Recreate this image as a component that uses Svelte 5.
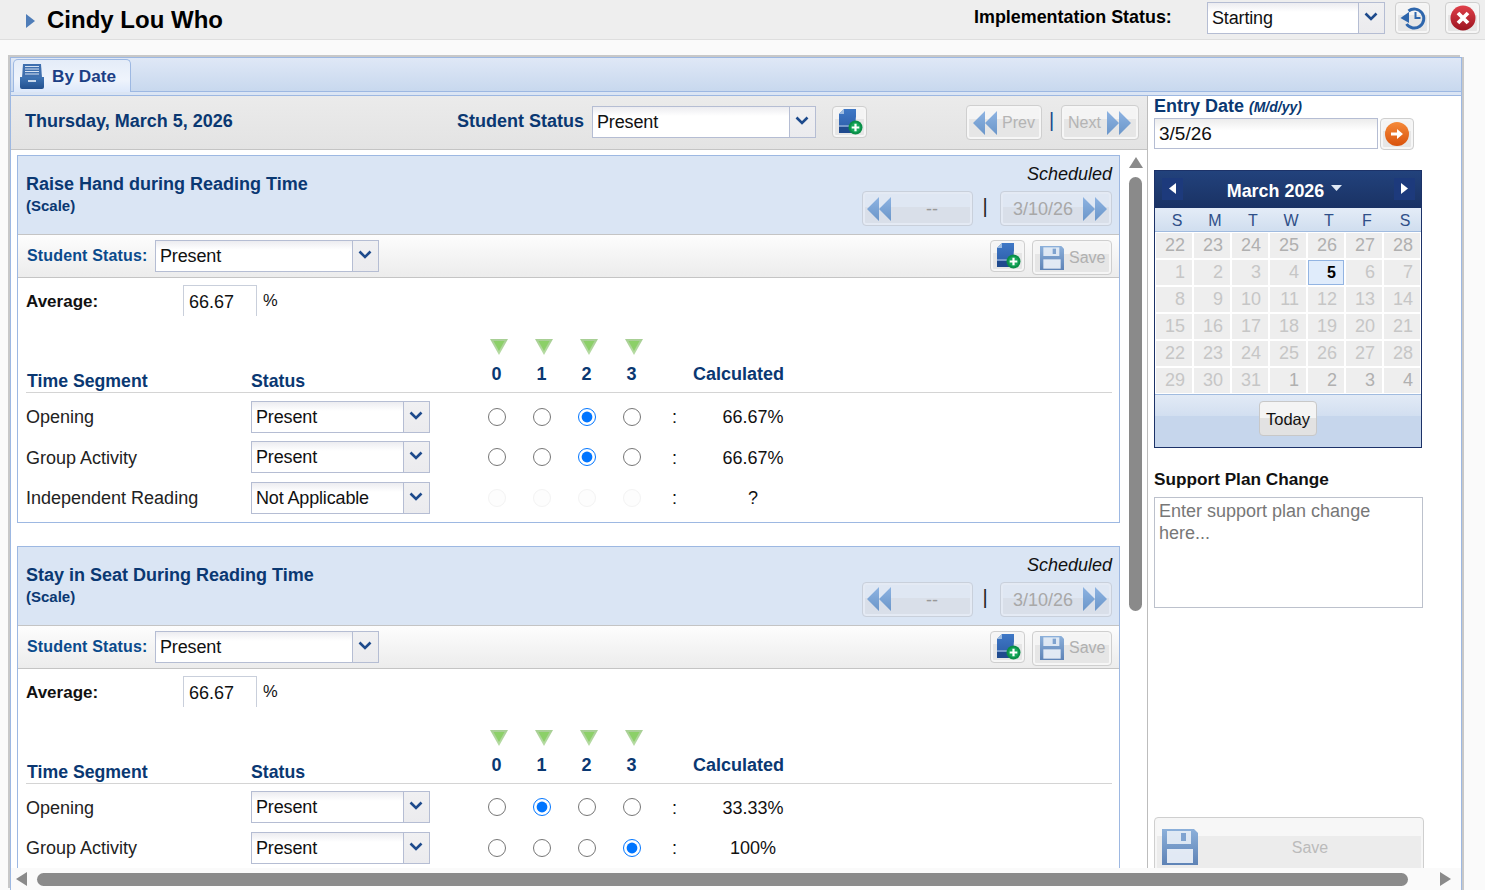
<script>
  const scale = [0, 1, 2, 3];
  const cards = [
    { title: 'Raise Hand during Reading Time', rows: [
      { name: 'Opening', status: 'Present', val: 2, calc: '66.67%' },
      { name: 'Group Activity', status: 'Present', val: 2, calc: '66.67%' },
      { name: 'Independent Reading', status: 'Not Applicable', val: -1, calc: '?', off: true }
    ]},
    { title: 'Stay in Seat During Reading Time', rows: [
      { name: 'Opening', status: 'Present', val: 1, calc: '33.33%' },
      { name: 'Group Activity', status: 'Present', val: 3, calc: '100%' }
    ]}
  ];
  const dows = ['S', 'M', 'T', 'W', 'T', 'F', 'S'];
  const d = (n, dark) => ({ n, dark });
  const days = [
    ...[22,23,24,25,26,27,28].map(n => d(n, true)),
    ...[1,2,3,4,5,6,7].map(n => d(n)),
    ...[8,9,10,11,12,13,14].map(n => d(n)),
    ...[15,16,17,18,19,20,21].map(n => d(n)),
    ...[22,23,24,25,26,27,28].map(n => d(n)),
    ...[29,30,31].map(n => d(n)),
    ...[1,2,3,4].map(n => d(n, true))
  ];
</script>

{#snippet select(text, cls)}
  <div class="select {cls}">
    <div class="sel-text">{text}</div>
    <div class="sel-btn">
      <svg width="14" height="9" viewBox="0 0 14 9"><path d="M1.5 1.5 7 7l5.500-5.500" fill="none" stroke="#1d4a8c" stroke-width="2.600"/></svg>
    </div>
  </div>
{/snippet}

{#snippet addIcon()}
  <svg width="26" height="28" viewBox="0 0 26 28">
    <path d="M7 1h12v7.500l-1 9.500-3 7H2V6z" fill="url(#docg)"/>
    <path d="M7 1v5H2z" fill="#9dbbe0"/>
    <path d="M2 18h12" stroke="#bcd0ea" stroke-width="1"/>
    <path d="M2 19h12v6H2z" fill="#1f4a8e"/>
    <circle cx="18.500" cy="19.500" r="7" fill="#0a8f48"/>
    <circle cx="18.500" cy="19.500" r="5" fill="#17a85b"/>
    <path d="M18.500 15.700v7.600M14.700 19.500h7.600" stroke="#fff" stroke-width="2.200"/>
  </svg>
{/snippet}

{#snippet disk(size)}
  <svg width={size} height={size} viewBox="0 0 36 36">
    <path d="M0 0h32l4 4v32H0z" fill="url(#diskg)"/>
    <path d="M5 2h24v13H5z" fill="#eef3f9" opacity=".85"/>
    <path d="M5 20h26v14H5z" fill="#eef3f9" opacity=".9"/>
    <rect x="19" y="4" width="5" height="8" fill="#7fa3d0"/>
  </svg>
{/snippet}

{#snippet dbl(dir)}
  <svg class={dir} width="26" height="26" viewBox="0 0 26 26">
    <path d="M13 1v24L1 13zM25 1v24L13 13z" fill="url(#arrg)"/>
  </svg>
{/snippet}

{#snippet tri()}
  <svg width="18" height="16" viewBox="0 0 18 16">
    <path d="M0 0h18l-9 16z" fill="url(#trig)"/>
    <path d="M3.500 2h11L9 12z" fill="#8cd068"/>
  </svg>
{/snippet}

<svg class="defs" width="0" height="0">
  <defs>
    <linearGradient id="docg" x1="0" y1="0" x2="0" y2="1"><stop offset="0" stop-color="#3f78c6"/><stop offset="1" stop-color="#2a5aa5"/></linearGradient>
    <linearGradient id="diskg" x1="0" y1="0" x2="0" y2="1"><stop offset="0" stop-color="#8cb0da"/><stop offset="1" stop-color="#5e83b6"/></linearGradient>
    <linearGradient id="arrg" x1="0" y1="0" x2="0" y2="1"><stop offset="0" stop-color="#8db3e2"/><stop offset="1" stop-color="#6b96c9"/></linearGradient>
    <linearGradient id="trig" x1="0" y1="0" x2="0" y2="1"><stop offset="0" stop-color="#a8cf95"/><stop offset="1" stop-color="#b7dca4"/></linearGradient>
    <linearGradient id="redg" x1="0" y1="0" x2="0" y2="1"><stop offset="0" stop-color="#e0404a"/><stop offset="1" stop-color="#9c1420"/></linearGradient>
    <linearGradient id="orag" x1="0" y1="0" x2="0" y2="1"><stop offset="0" stop-color="#f58a3a"/><stop offset="1" stop-color="#d9520c"/></linearGradient>
    <linearGradient id="trayg" x1="0" y1="0" x2="0" y2="1"><stop offset="0" stop-color="#3f74b4"/><stop offset="1" stop-color="#23508e"/></linearGradient>
  </defs>
</svg>

<div class="page">
  <header class="top">
    <svg class="caret" width="9" height="14" viewBox="0 0 9 14"><path d="M0 0l9 7-9 7z" fill="#4f7db8"/></svg>
    <h1>Cindy Lou Who</h1>
    <div class="impl">Implementation Status:</div>
    {@render select('Starting', 'sel-top')}
    <button class="btn icon restore" aria-label="History">
      <svg width="28" height="28" viewBox="0 0 28 28">
        <path d="M9.500 7a9.500 9.500 0 1 1-2 13" fill="none" stroke="#2f67ad" stroke-width="3"/>
        <path d="M1.500 14l8.500-6v11z" fill="#2f67ad"/>
        <path d="M16.500 8v6h5" fill="none" stroke="#2f67ad" stroke-width="2"/>
      </svg>
    </button>
    <button class="btn icon close" aria-label="Close">
      <svg width="26" height="26" viewBox="0 0 26 26">
        <circle cx="13" cy="13" r="12.500" fill="url(#redg)"/>
        <path d="M8 8l10 10M18 8L8 18" stroke="#fff" stroke-width="3.800"/>
      </svg>
    </button>
  </header>

  <main class="window">
    <div class="tabs">
      <div class="tab">
        <svg width="25" height="25" viewBox="0 0 25 25">
          <path d="M3 0h18l1 14H2z" fill="#3f6fae"/>
          <path d="M5 2.500h14M5 5h14M5 7.500h14M5 10h14" stroke="#d5e2f2" stroke-width="1.200"/>
          <path d="M0 13h24v10a2 2 0 0 1-2 2H2a2 2 0 0 1-2-2z" fill="url(#trayg)"/>
          <rect x="8" y="16" width="8" height="2" fill="#c8d8ec"/>
        </svg>
        <span>By Date</span>
      </div>
    </div>
    <div class="tabgap"></div>

    <div class="content">
      <section class="left">
        <div class="toolbar">
          <div class="date">Thursday, March 5, 2026</div>
          <div class="tb-status">Student Status</div>
          {@render select('Present', 'sel-main')}
          <button class="btn add main-add" aria-label="Add">{@render addIcon()}</button>
          <button class="btn nav prev" disabled>{@render dbl('')}<span>Prev</span></button>
          <span class="sep blue">|</span>
          <button class="btn nav next" disabled><span>Next</span>{@render dbl('flip')}</button>
        </div>

        <div class="scroller">
          <div class="cards">
            {#each cards as card}
              <article class="card">
                <div class="card-head">
                  <div class="titles">
                    <div class="title">{card.title}</div>
                    <div class="sub">(Scale)</div>
                  </div>
                  <div class="head-right">
                    <div class="sched">Scheduled</div>
                    <div class="head-nav">
                      <button class="btn nav wide" disabled>{@render dbl('')}<span class="mid">--</span></button>
                      <span class="sep dark">|</span>
                      <button class="btn nav date-nav" disabled><span class="mid">3/10/26</span>{@render dbl('flip')}</button>
                    </div>
                  </div>
                </div>
                <div class="card-bar">
                  <span class="lbl">Student Status:</span>
                  {@render select('Present', 'sel-card')}
                  <span class="fill"></span>
                  <button class="btn add" aria-label="Add">{@render addIcon()}</button>
                  <button class="btn save-sm" disabled>{@render disk(24)}<span>Save</span></button>
                </div>
                <div class="card-body">
                  <div class="avg">
                    <span class="avg-l">Average:</span>
                    <span class="avg-box">66.67</span>
                    <span class="pct">%</span>
                  </div>
                  <div class="grid">
                    <div class="hd hd-seg">Time Segment</div>
                    <div class="hd hd-seg hd-st">Status</div>
                    {#each scale as s}
                      <div class="hd hd-num"><span class="tri">{@render tri()}</span><span>{s}</span></div>
                    {/each}
                    <div class="hd"></div>
                    <div class="hd hd-calc">Calculated</div>
                    <div class="hd"></div>
                    {#each card.rows as r, ri}
                      <div class="cell name">{r.name}</div>
                      <div class="cell">{@render select(r.status, 'sel-row')}</div>
                      {#each scale as s}
                        <div class="cell radio" class:off={r.off}>
                          <input type="radio" name={card.title + ri} checked={r.val === s} disabled={r.off} aria-label={String(s)} />
                        </div>
                      {/each}
                      <div class="cell colon">:</div>
                      <div class="cell calc">{r.calc}</div>
                      <div class="cell"></div>
                    {/each}
                  </div>
                </div>
              </article>
            {/each}
          </div>
          <div class="vscroll">
            <svg width="14" height="11" viewBox="0 0 14 11"><path d="M7 0l7 11H0z" fill="#8a8a8a"/></svg>
            <div class="vthumb"></div>
          </div>
        </div>
      </section>

      <aside class="right">
        <div class="entry"><b>Entry Date</b> <i>(M/d/yy)</i></div>
        <div class="entry-row">
          <div class="entry-input">3/5/26</div>
          <button class="btn go" aria-label="Go">
            <svg width="24" height="24" viewBox="0 0 24 24">
              <circle cx="12" cy="12" r="12" fill="url(#orag)"/>
              <path d="M6 10.500h6V7l6 5-6 5v-3.500H6z" fill="#fff"/>
            </svg>
          </button>
        </div>

        <div class="cal">
          <div class="cal-head">
            <span class="cal-arrow"><svg width="7" height="11" viewBox="0 0 7 11"><path d="M7 0v11L0 5.500z" fill="#fff"/></svg></span>
            <span class="cal-title">March 2026 <svg width="11" height="6" viewBox="0 0 11 6"><path d="M0 0h11L5.500 6z" fill="#dfe8f4"/></svg></span>
            <span class="cal-arrow"><svg width="7" height="11" viewBox="0 0 7 11"><path d="M0 0v11l7-5.500z" fill="#fff"/></svg></span>
          </div>
          <div class="cal-dows">
            {#each dows as w}<span>{w}</span>{/each}
          </div>
          <div class="cal-days">
            {#each days as c, i}
              <span class="day" class:dark={c.dark} class:today={i === 11}>{c.n}</span>
            {/each}
          </div>
          <div class="cal-foot"><button class="today-btn">Today</button></div>
        </div>

        <div class="spc-l">Support Plan Change</div>
        <div class="spc">Enter support plan change here...</div>
        <div class="spacer"></div>
        <button class="btn save-lg" disabled>
          <span class="disk-wrap">{@render disk(36)}</span>
          <span>Save</span>
        </button>
      </aside>
    </div>

    <div class="hscroll">
      <svg width="11" height="14" viewBox="0 0 11 14"><path d="M11 0v14L0 7z" fill="#8a8a8a"/></svg>
      <div class="hthumb"></div>
      <svg width="11" height="14" viewBox="0 0 11 14"><path d="M0 0v14l11-7z" fill="#8a8a8a"/></svg>
    </div>
  </main>
</div>

<style>
  :global(body) { margin: 0; background: #fafafa; font-family: "Liberation Sans", Arial, sans-serif; }
  .defs { position: absolute; }
  .page { height: 890px; width: 1485px; overflow: hidden; background: #fafafa; color: #111; font-size: 18px; }
  button { font-family: inherit; padding: 0; }

  .top { height: 39px; border-bottom: 1px solid #dedede; background: #eee; display: flex; align-items: flex-start; padding-right: 5px; }
  .caret { margin: 14px 0 0 26px; }
  h1 { margin: 5px 0 0 12px; font-size: 24px; font-weight: bold; line-height: 30px; color: #000; }
  .impl { margin: 7px 0 0 auto; font-weight: bold; font-size: 17.900px; line-height: 20px; color: #000; width: 233px; white-space: nowrap; }

  .select { display: flex; box-sizing: border-box; height: 32px; border: 1px solid #b5bdd3; background: linear-gradient(#ececf0, #fff 30%); }
  .sel-text { flex: 1; padding-left: 4px; line-height: 30px; font-size: 18px; letter-spacing: -.15px; color: #111; white-space: nowrap; }
  .sel-btn { width: 26px; border-left: 1px solid #b5bdd3; background: linear-gradient(#f0f0f2, #ebebee); display: flex; align-items: center; justify-content: center; padding: 0 2px 3px 0; box-sizing: border-box; }
  .sel-top { width: 178px; margin-top: 2px; }
  .sel-main { width: 224px; margin-top: 10px; }
  .sel-card { width: 224px; }
  .sel-row { width: 179px; }

  .btn { box-sizing: border-box; border: 1px solid #cfcfcf; border-radius: 4px; background: linear-gradient(#f4f4f4 0 40%, #e6e6e6 40% 100%); box-shadow: inset 0 0 0 2px #f6f6f6; display: flex; align-items: center; justify-content: center; }
  .icon { height: 32px; width: 35px; margin-top: 2px; }
  .restore { margin-left: 10px; }
  .close { margin-left: 15px; }

  .window { margin: 17px 0 0 10px; width: 1452px; height: 833px; box-sizing: border-box; border: 1px solid #9db8e2; border-bottom: 0; background: #fff; box-shadow: -2px -2px 0 #c8c8c8, 2px 0 0 #c8c8c8; position: relative; display: flex; flex-direction: column; }
  .tabs { height: 34px; box-sizing: border-box; background: linear-gradient(#dfe8f6, #c8d8ee); border-bottom: 1px solid #9db8e2; padding: 1px 0 0 2px; flex: none; }
  .tab { box-sizing: border-box; width: 118px; height: 33px; border: 1px solid #9db8e2; border-bottom: 0; border-radius: 5px 5px 0 0; background: linear-gradient(#e4ecf8, #eff4fc 60%, #dde8fa); display: flex; align-items: center; padding-left: 6px; gap: 7px; color: #1c3f85; font-weight: bold; font-size: 17.200px; }
  .tabgap { height: 3px; background: #dbe5f4; border-bottom: 1px solid #9db8e2; flex: none; }

  .content { display: flex; flex: 1; min-height: 0; }
  .left { width: 1136px; flex: none; display: flex; flex-direction: column; border-right: 1px solid #bdbdbd; }
  .right { flex: 1; padding: 0 0 0 6px; display: flex; flex-direction: column; overflow: hidden; }

  .toolbar { height: 54px; flex: none; box-sizing: border-box; border-bottom: 1px solid #c4c4c4; background: linear-gradient(#ebebeb, #e3e3e3); display: flex; align-items: flex-start; padding-left: 14px; }
  .date { width: 432px; margin-top: 15px; font-size: 18px; font-weight: bold; color: #0a3872; line-height: 21px; white-space: nowrap; }
  .tb-status { width: 135px; margin-top: 15px; font-size: 18px; font-weight: bold; color: #0a3872; line-height: 21px; white-space: nowrap; }
  .main-add { margin: 10px 0 0 16px; }
  .add { width: 35px; height: 32px; }
  .nav { color: #b4b4b4; font-size: 16px; height: 35px; }
  .prev { width: 76px; margin: 9px 0 0 99px; padding-left: 5px; gap: 4px; justify-content: flex-start; }
  .next { width: 78px; margin: 9px 0 0 0; padding-left: 6px; gap: 5px; justify-content: flex-start; }
  .sep { font-size: 20px; line-height: 24px; text-align: center; }
  .sep.blue { width: 19px; margin-top: 12px; color: #174a8c; }
  .sep.dark { width: 24px; padding-right: 3px; margin-top: 3px; color: #222; }
  .flip { transform: scaleX(-1); }

  .scroller { flex: 1; min-height: 0; display: flex; overflow: hidden; padding-left: 6px; }
  .cards { width: 1103px; flex: none; padding-top: 5px; display: flex; flex-direction: column; gap: 23px; }
  .card { box-sizing: border-box; border: 1px solid #9db8e2; flex: none; }
  .card-head { height: 78px; background: #dae5f4; border-bottom: 1px solid #c4c4c4; display: flex; justify-content: space-between; padding: 0 7px 0 8px; }
  .titles { padding-top: 18px; }
  .title { font-size: 18px; font-weight: bold; line-height: 21px; color: #0a3872; }
  .sub { font-size: 15px; font-weight: bold; line-height: 18px; margin-top: 2px; color: #0a3872; }
  .sched { font-style: italic; font-size: 18px; line-height: 21px; text-align: right; color: #111; margin-top: 8px; }
  .head-nav { display: flex; align-items: flex-start; margin-top: 6px; }
  .wide { width: 111px; padding-left: 3px; justify-content: flex-start; background: linear-gradient(#dfe7f3 0 45%, #d9dfe9 45%); border-color: #c9d0db; box-shadow: inset 0 0 0 2px #e4eaf4; }
  .wide .mid { flex: 1; text-align: center; color: #999; font-size: 18px; padding-top: 2px; }
  .date-nav { width: 112px; padding-left: 12px; gap: 9px; justify-content: flex-start; background: linear-gradient(#dfe7f3 0 45%, #d9dfe9 45%); border-color: #c9d0db; box-shadow: inset 0 0 0 2px #e4eaf4; }
  .date-nav .mid { color: #a8a8a8; font-size: 18px; padding-top: 2px; }

  .card-bar { height: 43px; box-sizing: border-box; border-bottom: 1px solid #c4c4c4; background: linear-gradient(#fdfdfd, #ececec); display: flex; align-items: flex-start; padding: 5px 7px 0 9px; }
  .lbl { width: 128px; font-size: 16px; letter-spacing: .15px; font-weight: bold; color: #0a4a8c; line-height: 32px; white-space: nowrap; }
  .fill { flex: 1; }
  .save-sm { width: 80px; height: 35px; margin-left: 7px; color: #b0b0b0; font-size: 16px; gap: 5px; justify-content: flex-start; padding-left: 7px; }

  .card-body { padding: 7px 0 0 8px; }
  .avg { display: flex; align-items: flex-start; height: 31px; }
  .avg-l { width: 157px; font-weight: bold; font-size: 17px; color: #111; line-height: 33px; }
  .avg-box { box-sizing: border-box; width: 74px; height: 31px; border: 1px solid #c9cfdb; border-bottom: 0; padding-left: 5px; line-height: 32px; }
  .pct { margin-left: 6px; font-size: 16.500px; line-height: 30px; }

  .grid { display: grid; grid-template-columns: 225px 223px repeat(4, 45px) 40px 118px 1fr; margin: 23px 7px 4px 0; grid-auto-rows: 40.500px; grid-template-rows: 57px; }
  .hd { border-bottom: 1px solid #d4d4d4; color: #0a3872; font-weight: bold; height: 54px; box-sizing: border-box; }
  .hd-seg { padding: 32px 0 0 1px; line-height: 21px; font-size: 17.700px; white-space: nowrap; }
  .hd-st { padding-left: 0; }
  .hd-num { display: flex; flex-direction: column; align-items: center; }
  .tri { height: 16px; margin-left: 4px; }
  .hd-num > span:last-child { margin-top: 9px; line-height: 21px; font-size: 18px; }
  .hd-calc { padding: 25px 0 0 0; margin-left: -1px; line-height: 21px; white-space: nowrap; }
  .cell { display: flex; align-items: center; height: 40.500px; box-sizing: border-box; padding-top: 1px; }
  .name { color: #222; padding-top: 3px; }
  .radio { justify-content: center; }
  .radio input { width: 18px; height: 18px; margin: 0; }
  .radio.off input { opacity: .25; }
  .colon { padding: 3px 0 0 18px; }
  .calc { justify-content: center; color: #111; padding-top: 3px; }

  .vscroll { width: 13px; margin-left: 9px; padding-top: 7px; display: flex; flex-direction: column; align-items: center; gap: 9px; }
  .vthumb { width: 13px; height: 434px; flex: none; background: #8a8a8a; border-radius: 7px; }

  .entry { height: 22px; line-height: 21px; color: #0a3872; flex: none; }
  .entry b { font-size: 18px; }
  .entry i { font-size: 14px; font-weight: bold; }
  .entry-row { display: flex; gap: 2px; flex: none; }
  .entry-input { box-sizing: border-box; width: 224px; height: 31px; border: 1px solid #b5bdd3; background: linear-gradient(#ececec, #fff 40%); padding-left: 4px; line-height: 30px; font-size: 19px; }
  .go { width: 34px; height: 32px; }

  .cal { box-sizing: border-box; width: 268px; height: 278px; margin-top: 20px; border: 1px solid #1c3268; flex: none; display: flex; flex-direction: column; background: #fff; }
  .cal-head { height: 37px; flex: none; background: linear-gradient(#22427c, #1a3264); display: flex; align-items: center; justify-content: space-between; padding: 0 6px 0 7px; color: #fff; }
  .cal-arrow { width: 21px; height: 22px; background: #1d3a7c; display: flex; align-items: center; justify-content: center; margin-top: -2px; }
  .cal-title { font-weight: bold; font-size: 17.900px; display: flex; align-items: center; gap: 7px; margin: 3px 0 0 -8px; }
  .cal-title svg { margin-top: -6px; }
  .cal-dows { height: 24px; flex: none; background: linear-gradient(#e4ecf7, #d0deef); border-bottom: 1px solid #a0bbdf; box-sizing: border-box; display: grid; grid-template-columns: repeat(7, 38px); padding-left: 3px; color: #2f4f88; font-size: 16px; line-height: 25px; text-align: center; }
  .cal-days { display: grid; grid-template-columns: repeat(7, 36px); grid-auto-rows: 25px; gap: 2px; padding: 1px 0 0 1px; flex: none; height: 162px; box-sizing: border-box; }
  .day { background: #eee; color: #c6c6c6; text-align: right; padding-right: 7px; line-height: 25px; font-size: 18px; box-sizing: border-box; }
  .day.dark { color: #b0b0b0; }
  .day.today { background: #e0ecfb; border: 1px solid #92b4e2; color: #000; font-weight: bold; font-size: 16px; line-height: 23px; padding-right: 7px; }
  .cal-foot { flex: 1; border-top: 1px solid #a0bbdf; background: linear-gradient(#e2eaf6, #d2dff0 40%, #c6d6ec 40%); display: flex; justify-content: center; padding-top: 6px; box-sizing: border-box; }
  .today-btn { width: 58px; height: 35px; padding-top: 2px; border: 1px solid #c8c8c8; border-radius: 4px; background: linear-gradient(#f4f4f4 0 50%, #e2e2e2 50%); font-size: 16.500px; color: #111; }

  .spc-l { margin-top: 21px; font-weight: bold; font-size: 17.200px; line-height: 20px; color: #111; flex: none; }
  .spc { box-sizing: border-box; width: 269px; height: 111px; margin-top: 8px; border: 1px solid #bcc1cc; padding: 2px 4px; color: #777; line-height: 22px; flex: none; }
  .spacer { flex: 1; }
  .save-lg { width: 270px; height: 72px; flex: none; margin-bottom: 1px; position: relative; color: #bbb; font-size: 16px; padding: 0 0 10px 42px; background: linear-gradient(#f7f7f7 0 18px, #ececec 18px); }
  .disk-wrap { position: absolute; left: 7px; top: 11px; }

  .hscroll { position: absolute; left: 0; right: 0; bottom: 0; height: 22px; background: #fafafa; display: flex; align-items: center; padding: 0 10px 0 5px; box-sizing: border-box; }
  .hthumb { width: 1371px; height: 13px; margin: 0 32px 0 10px; background: #8a8a8a; border-radius: 7px; }
</style>
